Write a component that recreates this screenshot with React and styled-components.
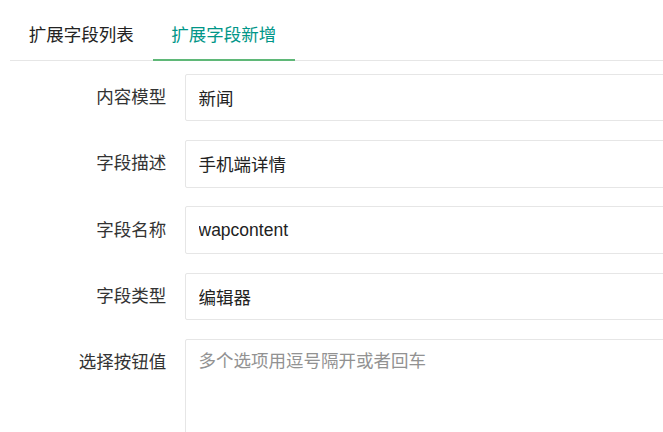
import React from "react";
import styled, { createGlobalStyle } from "styled-components";

const Global = createGlobalStyle`
  html, body {
    margin: 0;
    padding: 0;
    overflow: hidden;
    background: #fff;
  }
  body {
    font-family: "Liberation Sans", "Noto Sans CJK SC", Arial, sans-serif;
    font-size: 17.5px;
    color: #333;
  }
  * { box-sizing: border-box; }
`;

const Page = styled.div`
  padding: 10px 0 0 10px;
`;

const TabTitle = styled.ul`
  display: flex;
  margin: 0;
  padding: 0;
  list-style: none;
  height: 51.25px;
  border-bottom: 1px solid #e6e6e6;
`;

const Tab = styled.li`
  position: relative;
  padding: 0 18.75px;
  height: 50px;
  line-height: 50px;
  cursor: pointer;
  color: ${(p) => (p.active ? "#009688" : "#222")};

  &::after {
    content: "";
    display: ${(p) => (p.active ? "block" : "none")};
    position: absolute;
    left: 0;
    right: 0;
    bottom: -1.25px;
    height: 2px;
    background: #5fb878;
  }
`;

const Form = styled.form`
  padding-top: 12.5px;
  margin-right: -20px;
`;

const Item = styled.div`
  display: grid;
  grid-template-columns: 175px 1fr;
  margin-bottom: 18.75px;
`;

const Label = styled.label`
  padding: 11.25px 18.75px;
  line-height: 25px;
  text-align: right;
  color: #333;
`;

const Input = styled.input`
  height: 47.5px;
  padding: 0 12.5px;
  border: 1px solid #e6e6e6;
  border-radius: 2px;
  font: inherit;
  color: #222;
  outline: none;
  background: #fff;
`;

const TextArea = styled.textarea`
  min-height: 125px;
  padding: 7.5px 12.5px;
  line-height: 25px;
  border: 1px solid #e6e6e6;
  border-radius: 2px;
  font: inherit;
  color: #222;
  resize: none;
  outline: none;

  &::placeholder {
    color: #929292;
  }
`;

const fields = [
  { label: "内容模型", value: "新闻" },
  { label: "字段描述", value: "手机端详情" },
  { label: "字段名称", value: "wapcontent" },
  { label: "字段类型", value: "编辑器" },
];

export default function App() {
  return (
    <Page>
      <Global />
      <TabTitle>
        <Tab>扩展字段列表</Tab>
        <Tab active>扩展字段新增</Tab>
      </TabTitle>
      <Form>
        {fields.map((f) => (
          <Item key={f.label}>
            <Label>{f.label}</Label>
            <Input defaultValue={f.value} readOnly />
          </Item>
        ))}
        <Item>
          <Label>选择按钮值</Label>
          <TextArea placeholder="多个选项用逗号隔开或者回车" />
        </Item>
      </Form>
    </Page>
  );
}
